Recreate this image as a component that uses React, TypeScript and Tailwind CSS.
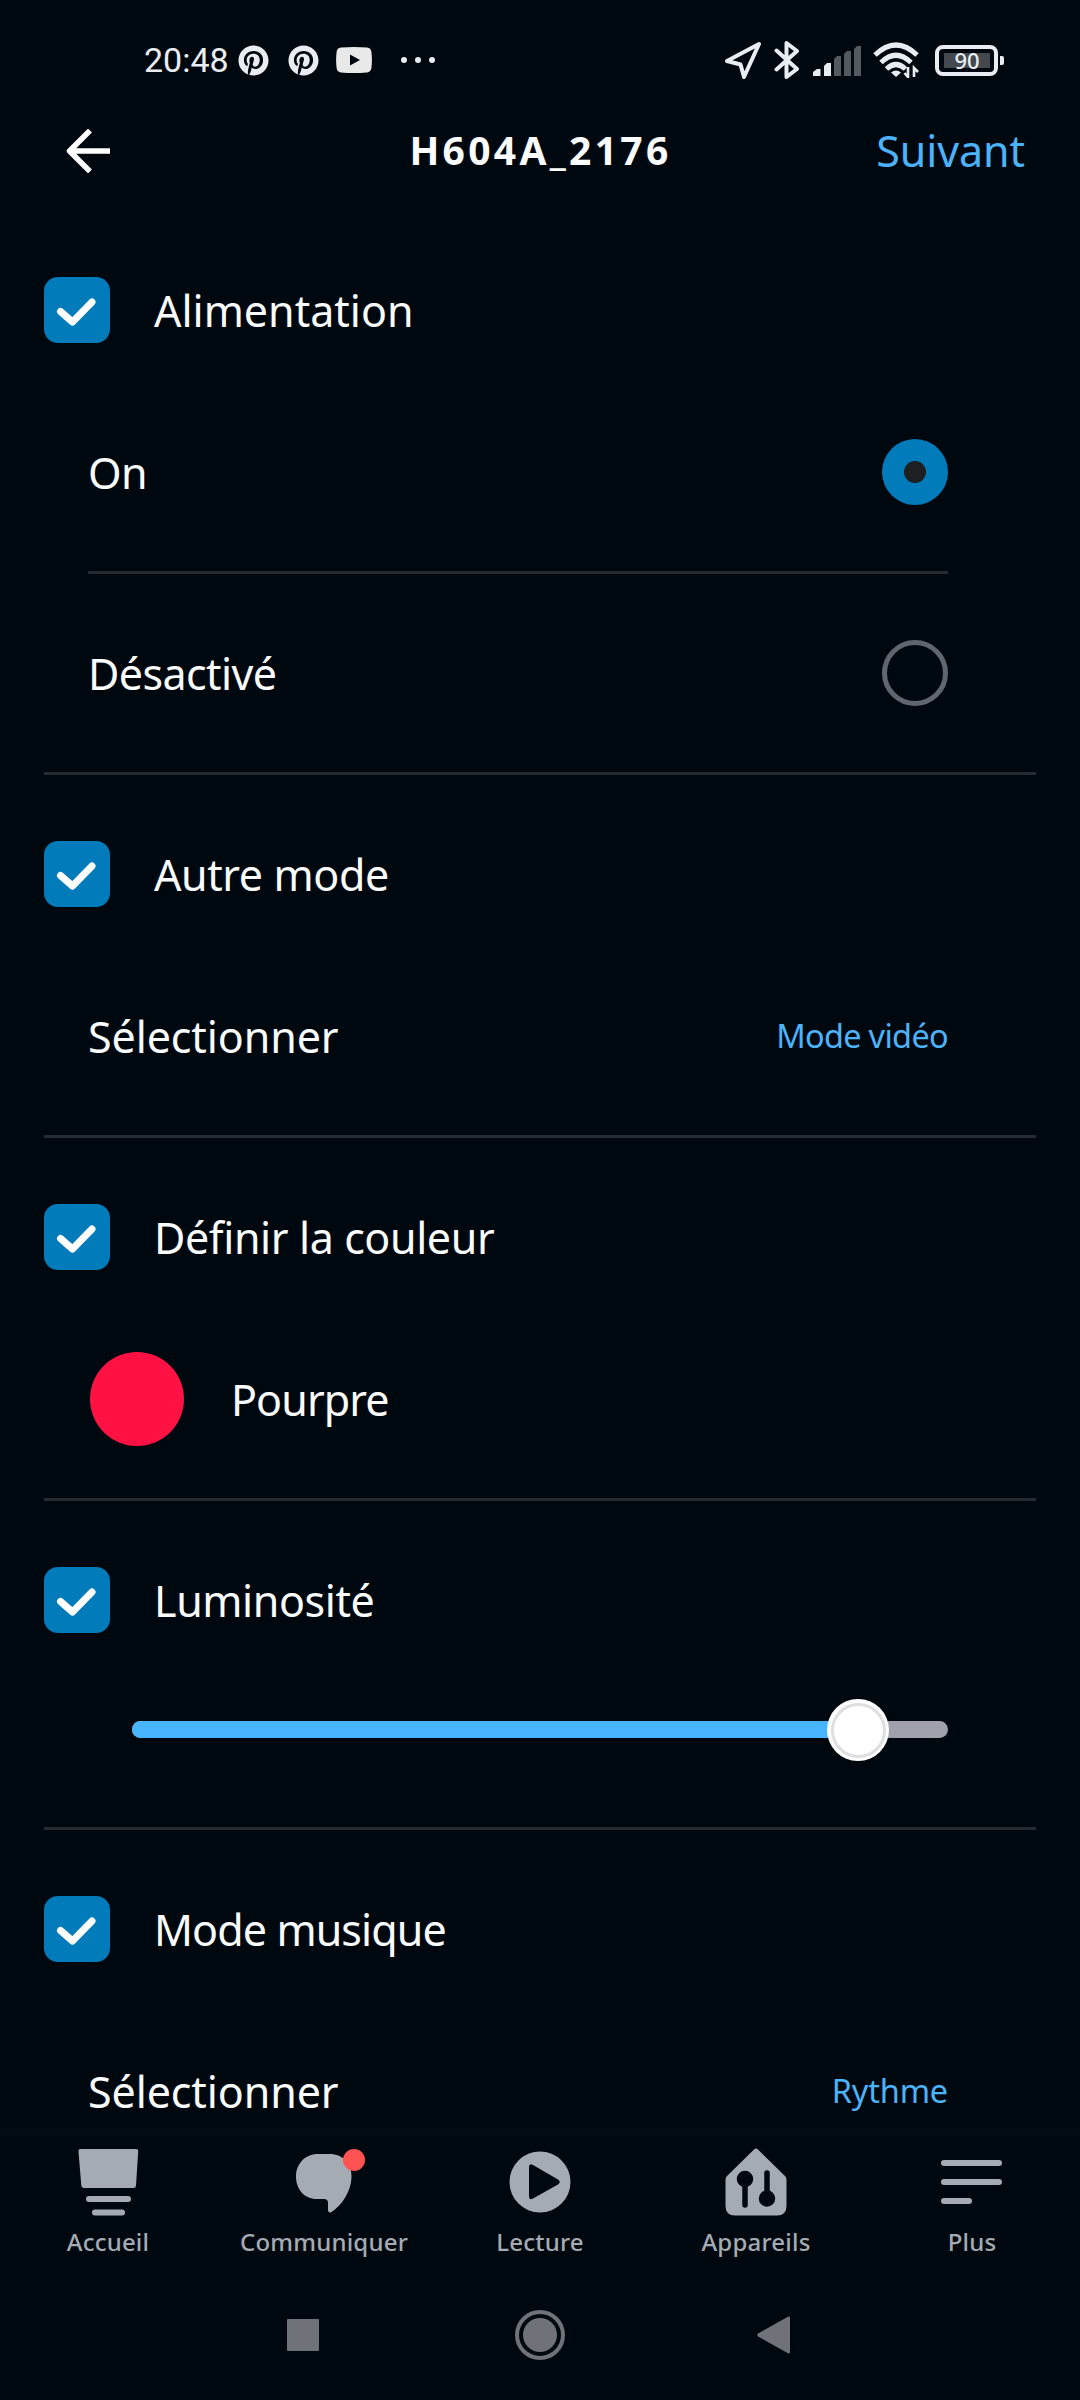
import React from 'react';
import { FaPinterest } from 'react-icons/fa';

const StatusBar: React.FC = () => (
  <div className="flex h-[120px] items-center pl-[144px] pr-[76px] text-[#e9edf2]">
    <span className="w-[94px] font-[Roboto,sans-serif] text-[34px] leading-none">20:48</span>
    <FaPinterest className="h-[31px] w-[31px]" />
    <FaPinterest className="ml-[19px] h-[31px] w-[31px]" />
    <svg className="ml-[17px] h-[26px] w-[36px]" viewBox="0 0 36 26">
      <path fill="#e9e9ea" fillRule="evenodd" d="M5 .6Q18-.6 31 .6Q35 1 35.4 5Q36.4 13 35.4 21Q35 25 31 25.4Q18 26.6 5 25.4Q1 25 .6 21Q-.4 13 .6 5Q1 1 5 .6ZM14 7.5V18.5L24 13Z" />
    </svg>
    <div className="ml-[29px] flex gap-[8px]">
      <i className="h-[6px] w-[6px] rounded-full bg-current" />
      <i className="h-[6px] w-[6px] rounded-full bg-current" />
      <i className="h-[6px] w-[6px] rounded-full bg-current" />
    </div>
    <svg className="ml-auto h-[38px] w-[38px]" viewBox="0 0 38 38" fill="none" stroke="currentColor" strokeWidth="4" strokeLinejoin="round">
      <path d="M35 3L3 20L16.500 23.500L20 36Z" />
    </svg>
    <svg className="ml-[12px] h-[40px] w-[26px]" viewBox="0 0 26 40" fill="none" stroke="currentColor" strokeWidth="4" strokeLinecap="round" strokeLinejoin="round">
      <path d="M2.500 10.500L23 29L12.500 37V3L23 11L2.500 29.500" />
    </svg>
    <svg className="ml-[13px] h-[31px] w-[49px]" viewBox="0 0 49 31">
      <path d="M0 31V27L4 24H7.500V31Z" fill="currentColor" />
      <path d="M11 31V21L14 18H18V31Z" fill="currentColor" />
      <path d="M21 31V14L24 11H28V31ZM31 31V9L34 6H38V31ZM41 31V4L44 1H48V31Z" fill="#555a61" />
    </svg>
    <svg className="ml-[11px] h-[36px] w-[48px]" viewBox="0 0 48 36" fill="none" stroke="currentColor" strokeWidth="5">
      <path d="M2 13Q23 -7 44 13" />
      <path d="M8 20.500Q23 6 38 20.500" />
      <path d="M13.500 27Q23 18 32.500 27" />
      <path d="M18 30.500Q23 26.500 28 30.500L23 35Z" fill="currentColor" stroke="none" />
      <path d="M35 25V35L31.500 31M41 35V26L45 30" strokeWidth="2.600" />
    </svg>
    <div className="ml-[14px] flex items-center">
      <div className="flex h-[31px] w-[63px] items-center justify-center rounded-[8px] border-4 border-current p-[4px]">
        <div className="flex h-[15px] w-[46px] items-center justify-start bg-[#44494f] pl-[11px]">
          <span className="font-['Noto_Sans',sans-serif] text-[22px] font-medium leading-none">90</span>
        </div>
      </div>
      <i className="ml-[2px] h-[9px] w-[4px] rounded-r-[2px] bg-current" />
    </div>
  </div>
);

const Header: React.FC = () => (
  <div className="grid h-[61px] grid-cols-[1fr_auto_1fr] items-center px-[55px]">
    <svg className="ml-[11px] h-[44px] w-[45px]" viewBox="0 0 45 44" fill="none" stroke="white" strokeWidth="5.500" strokeLinejoin="round">
      <path d="M24 1.500L3.500 22L24 42.500M4 22H44" />
    </svg>
    <h1 className="pb-[3px] pl-[1px] text-[39px] font-bold leading-none tracking-[3.300px]">H604A_2176</h1>
    <button className="justify-self-end text-[43px] leading-none tracking-[-0.100px] text-[#4cb3fb]">Suivant</button>
  </div>
);

const Section: React.FC<{ title: string; tracking?: string; last?: boolean; children: React.ReactNode }> = ({ title, tracking = '', last, children }) => (
  <section className={`mx-11 shrink-0 ${last ? '' : 'border-b-[3px] border-[#242b31]'}`}>
    <div className="flex h-[162px] items-start gap-11 pt-[66px]">
      <div className="flex h-[66px] w-[66px] items-center justify-center rounded-[14px] bg-[#027bbb]">
        <svg className="h-[32px] w-[42px]" viewBox="0 0 42 32" fill="none" stroke="white" strokeWidth="7" strokeLinecap="round" strokeLinejoin="round">
          <path d="M4.500 17.500L16.500 28L36 8" />
        </svg>
      </div>
      <h2 className={`text-[43px] leading-[68px] ${tracking}`}>{title}</h2>
    </div>
    <div className="ml-11 mr-[88px]">{children}</div>
  </section>
);

const Radio: React.FC<{ label: string; checked?: boolean }> = ({ label, checked }) => (
  <div className="flex h-[198px] items-center justify-between">
    <span className="pt-[2px] text-[43px] leading-[66px] tracking-[-0.600px]">{label}</span>
    {checked ? (
      <span className="flex h-[66px] w-[66px] items-center justify-center rounded-full bg-[#027bbb]">
        <span className="h-[22px] w-[22px] rounded-full bg-[#1d1f23]" />
      </span>
    ) : (
      <span className="h-[66px] w-[66px] rounded-full border-[5px] border-[#60666d]" />
    )}
  </div>
);

const Select: React.FC<{ value: string; tracking: string }> = ({ value, tracking }) => (
  <div className="flex h-[198px] items-center justify-between">
    <span className="pt-[2px] text-[43px] leading-[66px] tracking-[-0.100px]">Sélectionner</span>
    <span className={`text-[32.500px] leading-[44px] text-[#4cb3fb] ${tracking}`}>{value}</span>
  </div>
);

const Slider: React.FC<{ value: number }> = ({ value }) => (
  <div className="ml-11 h-[164px] pt-[58px]">
    <div className="relative h-[17px] rounded-full bg-[#a0a1ad]">
      <div className="h-full rounded-full bg-[#48b6ff]" style={{ width: `${value}%` }} />
      <div
        className="absolute top-[-22px] flex h-[62px] w-[62px] -translate-x-1/2 items-center justify-center rounded-full bg-white"
        style={{ left: `${value}%` }}
      >
        <div className="h-[55px] w-[55px] rounded-full border-[3px] border-[#dfdfe1]" />
      </div>
    </div>
  </div>
);

const icons = {
  home: (
    <>
      <path d="M5 7H61Q63.500 7 63.200 9.500L61 43.500Q60.800 46 58.500 46H9Q6.600 46 6.300 43.500L3.500 9.500Q3.300 7 5 7Z" />
      <rect x="11" y="54" width="45" height="6" rx="3" />
      <rect x="17" y="67.500" width="33" height="6" rx="3" />
    </>
  ),
  chat: (
    <>
      <path d="M27 12H39C51 12 60.500 21 60.500 34C60.500 50 50 64 40.500 70Q37.500 71.500 37 68.500V61Q37 57 33 57H26C13 57 5 47 5 34.500S14 12 27 12Z" />
      <circle cx="63" cy="18" r="11" fill="#ff5253" />
    </>
  ),
  play: <path fillRule="evenodd" d="M33 9.500A30.500 30.500 0 1 0 33 70.500A30.500 30.500 0 1 0 33 9.500ZM22 25Q22 21 26 23L51 37.500Q54.500 40 51 42.500L26 56.500Q22 58.500 22 54.500Z" />,
  devices: (
    <>
      <path d="M31 7.500Q33 5.500 35 7.500L62 34Q63.500 35.500 63.500 38V64Q63.500 73.500 54 73.500H12Q2.500 73.500 2.500 64V38Q2.500 35.500 4 34Z" />
      <g stroke="#00080f" strokeWidth="5.500" strokeLinecap="round" fill="#00080f">
        <path d="M22 40V63M44 31V55" />
        <circle cx="22" cy="37" r="5.500" />
        <circle cx="44" cy="56.500" r="5.500" />
      </g>
    </>
  ),
  more: (
    <>
      <rect x="2" y="18" width="61" height="6" rx="3" />
      <rect x="2" y="37" width="61" height="6" rx="3" />
      <rect x="2" y="56" width="31" height="6" rx="3" />
    </>
  ),
};

const tabs: { label: string; icon: keyof typeof icons }[] = [
  { label: 'Accueil', icon: 'home' },
  { label: 'Communiquer', icon: 'chat' },
  { label: 'Lecture', icon: 'play' },
  { label: 'Appareils', icon: 'devices' },
  { label: 'Plus', icon: 'more' },
];

const TabBar: React.FC = () => (
  <nav className="grid h-[152px] grid-cols-5 border-t-[8px] border-[#040c13] pt-[6px] text-[#a5abb2]">
    {tabs.map((tab) => (
      <div key={tab.label} className="flex flex-col items-center">
        <svg className="h-[78px] w-[66px] overflow-visible" viewBox="0 0 66 78" fill="currentColor">
          {icons[tab.icon]}
        </svg>
        <span className="mt-[6px] text-[24px] font-medium leading-[32px] tracking-[0.200px]">{tab.label}</span>
      </div>
    ))}
  </nav>
);

const SystemBar: React.FC = () => (
  <div className="flex h-[120px] items-start justify-between pl-[287px] pr-[290px] pt-[30px] text-[#6f7379]">
    <div className="mt-[9px] h-[32px] w-[32px] rounded-[1px] bg-current" />
    <div className="ml-[3px] flex h-[50px] w-[50px] items-center justify-center rounded-full border-4 border-current">
      <div className="h-[34px] w-[34px] rounded-full bg-current" />
    </div>
    <svg className="mt-[6px] h-[38px] w-[33px]" viewBox="0 0 33 38" fill="currentColor">
      <path d="M31 .8Q33 0 33 2V36Q33 38 31 37.200L1 20.500Q-.5 19 1 17.500Z" />
    </svg>
  </div>
);

const App: React.FC = () => {
  return (
    <div className="flex h-[2400px] w-[1080px] flex-col overflow-hidden bg-[#00080f] font-['Noto_Sans',sans-serif] text-[#fbfcfd]">
      <StatusBar />
      <Header />
      <main className="mt-[30px] flex min-h-0 flex-1 flex-col overflow-hidden">
        <Section title="Alimentation">
          <Radio label="On" checked />
          <div className="h-[3px] bg-[#242b31]" />
          <Radio label="Désactivé" />
        </Section>
        <Section title="Autre mode" tracking="tracking-[-0.400px]">
          <Select value="Mode vidéo" tracking="tracking-[-0.700px]" />
        </Section>
        <Section title="Définir la couleur" tracking="tracking-[-0.400px]">
          <div className="flex h-[198px] items-center gap-[47px] pl-[2px]">
            <div className="h-[94px] w-[94px] rounded-full bg-[#ff1144]" />
            <span className="pt-[2px] text-[43px] leading-[66px] tracking-[-0.900px]">Pourpre</span>
          </div>
        </Section>
        <Section title="Luminosité" tracking="tracking-[-0.400px]">
          <Slider value={89} />
        </Section>
        <Section title="Mode musique" tracking="tracking-[-0.900px]" last>
          <Select value="Rythme" tracking="tracking-[-0.200px]" />
        </Section>
      </main>
      <TabBar />
      <SystemBar />
    </div>
  );
};

export default App;
